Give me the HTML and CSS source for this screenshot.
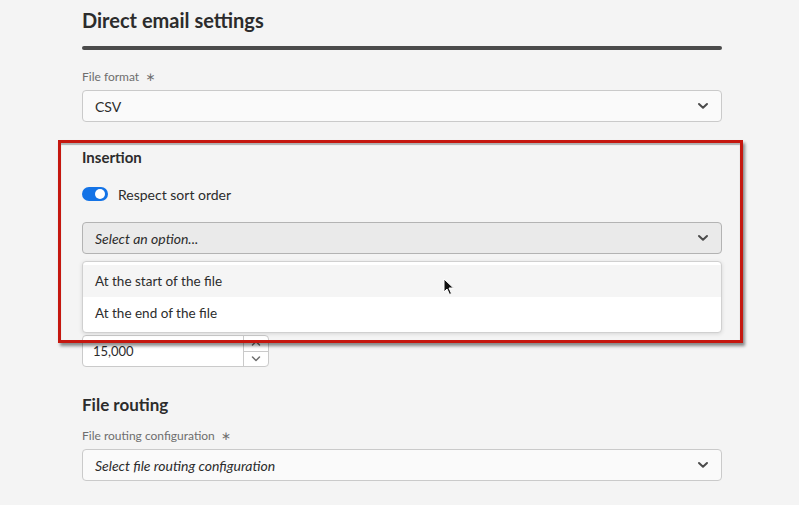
FILE: index.html
```html
<!DOCTYPE html>
<html>
<head>
<meta charset="utf-8">
<link rel="stylesheet" href="styles.css">
</head>
<body>
<div class="page">
  <h1 class="title">Direct email settings</h1>
  <div class="divider"></div>

  <div class="field f-format">
    <label class="label">File format <span class="req">∗</span></label>
    <div class="select">
      <span class="value">CSV</span>
      <svg class="chev" width="12" height="8" viewBox="0 0 12 8"><path d="M2 2 L6 5.8 L10 2" fill="none" stroke="#4b4b4b" stroke-width="2" stroke-linecap="round" stroke-linejoin="round"/></svg>
    </div>
  </div>

  <h2 class="section">Insertion</h2>
  <div class="toggle-row">
    <span class="toggle"><span class="knob"></span></span>
    <span class="toggle-label">Respect sort order</span>
  </div>
  <div class="select hover">
    <span class="placeholder">Select an option...</span>
    <svg class="chev" width="12" height="8" viewBox="0 0 12 8"><path d="M2 2 L6 5.8 L10 2" fill="none" stroke="#4b4b4b" stroke-width="2" stroke-linecap="round" stroke-linejoin="round"/></svg>
  </div>

  <div class="field f-number">
    <div class="number">
      <span class="num-value">15,000</span>
      <span class="stepper">
        <span class="step"><svg width="10" height="6" viewBox="0 0 10 6"><path d="M1.5 5 L5 1.5 L8.5 5" fill="none" stroke="#6e6e6e" stroke-width="1.5" stroke-linecap="round" stroke-linejoin="round"/></svg></span>
        <span class="step step-down"><svg width="10" height="6" viewBox="0 0 10 6"><path d="M1.5 1 L5 4.5 L8.5 1" fill="none" stroke="#6e6e6e" stroke-width="1.5" stroke-linecap="round" stroke-linejoin="round"/></svg></span>
      </span>
    </div>
  </div>

  <h2 class="section big">File routing</h2>
  <div class="field f-routing">
    <label class="label">File routing configuration <span class="req">∗</span></label>
    <div class="select">
      <span class="placeholder">Select file routing configuration</span>
      <svg class="chev" width="12" height="8" viewBox="0 0 12 8"><path d="M2 2 L6 5.8 L10 2" fill="none" stroke="#4b4b4b" stroke-width="2" stroke-linecap="round" stroke-linejoin="round"/></svg>
    </div>
  </div>
</div>

<div class="popover">
  <div class="option active">At the start of the file</div>
  <div class="option">At the end of the file</div>
</div>

<div class="highlight"></div>

<svg class="cursor" width="12" height="18" viewBox="0 0 12 18"><path d="M1 1 L1 14 L4 11 L6.5 16.5 L8.5 15.5 L6 10 L10.5 10 Z" fill="#111" stroke="#fff" stroke-width="1"/></svg>
</body>
</html>
```

FILE: styles.css
```css
* { box-sizing: border-box; }
html, body { margin: 0; padding: 0; }
body {
  background: #f4f4f4;
  font-family: Lato, "Open Sans", sans-serif;
  color: #2c2c2c;
  width: 799px;
  height: 505px;
  overflow: hidden;
  position: relative;
}
.page {
  width: 640px;
  margin-left: 82px;
  padding-top: 8px;
  display: flex;
  flex-direction: column;
}
.title {
  margin: 0;
  font-size: 20px;
  line-height: 24px;
  font-weight: 700;
  color: #2c2c2c;
}
.divider {
  height: 4px;
  background: #4b4b4b;
  border-radius: 2px;
  margin-top: 14px;
}
.field { display: flex; flex-direction: column; gap: 5px; }
.f-format { margin-top: 19px; }
.label {
  font-size: 12px;
  line-height: 16px;
  color: #6e6e6e;
}
.req {
  font-family: "DejaVu Sans", sans-serif;
  font-size: 12px;
  margin-left: 3px;
  color: #6e6e6e;
}
.select {
  height: 32px;
  border: 1px solid #cacaca;
  border-radius: 4px;
  background: #fafafa;
  display: flex;
  align-items: center;
  justify-content: space-between;
  padding: 0 12px 0 12px;
}
.select.hover {
  background: #eaeaea;
  border-color: #b3b3b3;
}
.value { font-size: 14px; color: #2c2c2c; }
.placeholder { font-size: 14px; font-style: italic; color: #2c2c2c; }
.chev { display: block; }
.section {
  margin: 25px 0 0 0;
  font-size: 15px;
  line-height: 20px;
  font-weight: 700;
  color: #2c2c2c;
}
.section.big {
  margin-top: 27px;
  font-size: 17px;
  line-height: 22px;
}
.toggle-row {
  height: 32px;
  margin-top: 11px;
  display: flex;
  align-items: center;
  gap: 10px;
}
.toggle {
  width: 26px;
  height: 14px;
  border-radius: 7px;
  background: #1473e6;
  position: relative;
  display: block;
}
.knob {
  position: absolute;
  right: 3px;
  top: 2px;
  width: 10px;
  height: 10px;
  border-radius: 50%;
  background: #fff;
}
.toggle-label { font-size: 14px; color: #2c2c2c; }
.toggle-row + .select { margin-top: 12px; }
.f-number { margin-top: 81px; }
.number {
  width: 187px;
  height: 32px;
  border: 1px solid #cacaca;
  border-radius: 4px;
  background: #fff;
  display: flex;
  align-items: center;
  justify-content: space-between;
}
.num-value { font-size: 13px; padding-left: 10px; color: #2c2c2c; }
.stepper {
  width: 25px;
  height: 100%;
  border-left: 1px solid #cacaca;
  display: flex;
  flex-direction: column;
}
.step {
  flex: 1;
  display: flex;
  align-items: center;
  justify-content: center;
}
.step-down { border-top: 1px solid #cacaca; }
.f-routing { margin-top: 12px; }
.popover {
  position: absolute;
  left: 82px;
  top: 261px;
  width: 640px;
  height: 72px;
  background: #fff;
  border: 1px solid #d0d0d0;
  border-radius: 4px;
  padding: 3px 0;
  box-shadow: 0 1px 4px rgba(0,0,0,0.12);
}
.option {
  height: 32px;
  line-height: 32px;
  padding-left: 12px;
  font-size: 13.5px;
  color: #2c2c2c;
}
.option.active { background: #f5f5f5; }
.highlight {
  position: absolute;
  left: 58px;
  top: 140px;
  width: 685px;
  height: 203px;
  border: 3px solid #c5170f;
  box-shadow: 2px 3px 3px rgba(0,0,0,0.45), inset 0 2px 1px rgba(0,0,0,0.28);
}
.cursor {
  position: absolute;
  left: 443px;
  top: 278px;
}
```
